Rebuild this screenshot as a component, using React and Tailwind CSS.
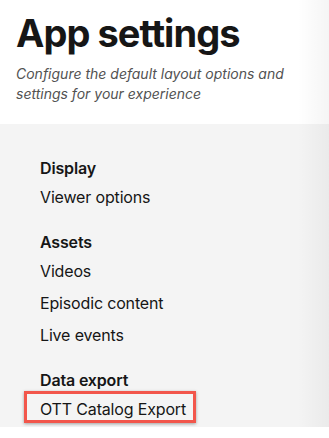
export default function App() {
  const sections = [
    { title: "Display", items: ["Viewer options"] },
    { title: "Assets", items: ["Videos", "Episodic content", "Live events"] },
    { title: "Data export", items: ["OTT Catalog Export"] },
  ];

  return (
    <div className="relative w-[329px] h-[438px] overflow-hidden bg-white text-[#161616] font-['Inter','Liberation_Sans',sans-serif]">
      {/* header */}
      <div className="px-4 pt-[11px] pb-5">
        <h1 className="text-[38px] leading-[44px] font-bold tracking-[-0.025em]">App settings</h1>
        <p className="mt-[9px] text-[14px] leading-5 italic text-[#525252]">
          Configure the default layout options and settings for your experience
        </p>
      </div>

      {/* nav panel */}
      <div className="bg-[#f4f4f4] pt-[31px] pb-[2px] px-10 flex flex-col gap-4">
        {sections.map((s) => (
          <div key={s.title} className="flex flex-col">
            <div className="h-[26px] flex items-center text-base font-semibold tracking-[-0.01em]">{s.title}</div>
            {s.items.map((item) => (
              <div key={item} className="relative h-8 flex items-center text-base tracking-[-0.01em]">
                {item === "OTT Catalog Export" && (
                  <div className="absolute -left-4 -top-[2px] w-[172px] h-8 border-[3px] border-[#f2564b] shadow-[0_1px_3px_rgba(0,0,0,0.35)]" />
                )}
                <span className="relative">{item}</span>
              </div>
            ))}
          </div>
        ))}
      </div>

      {/* soft edge shading on the right */}
      <div className="absolute top-0 right-0 h-[427px] w-8 bg-gradient-to-r from-transparent to-black/[0.04] pointer-events-none" />
    </div>
  );
}
